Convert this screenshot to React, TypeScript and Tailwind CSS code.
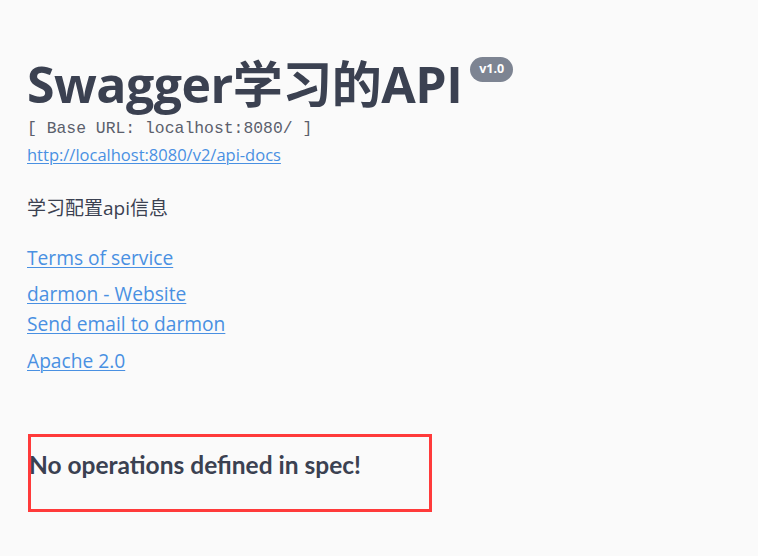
import React from "react";

const linkCls =
  "text-[#4990e2] underline underline-offset-2 decoration-1 text-[19.2px] leading-[26px]";

function VersionBadge({ label }: { label: string }) {
  return (
    <span className="ml-2 mt-[7px] inline-flex h-[25px] items-center rounded-full bg-[#7d8492] px-[9px] text-[12.5px] font-bold text-white self-start">
      {label}
    </span>
  );
}

export default function App() {
  return (
    <div
      className="relative min-h-[556px] w-full bg-[#fafafa] text-[#3b4151]"
      style={{ fontFamily: '"Open Sans", "Noto Sans CJK SC", sans-serif' }}
    >
      <div className="px-[27px] pt-[50px]">
        <div className="flex items-start">
          <h2 className="text-[50px] font-bold leading-[68px] tracking-[-0.5px]">
            Swagger学习的API
          </h2>
          <VersionBadge label="v1.0" />
        </div>
        <pre
          className="mt-[1px] text-[16.4px] font-light leading-[20px] text-[#5b606c]"
          style={{ fontFamily: '"Liberation Mono", monospace' }}
        >
          [ Base URL: localhost:8080/ ]
        </pre>
        <a
          href="#"
          className="mt-[5px] block w-fit text-[16.5px] leading-[22px] text-[#4990e2] underline decoration-1 underline-offset-2"
        >
          http://localhost:8080/v2/api-docs
        </a>

        <p className="mt-[29px] text-[19px] leading-[26px]">学习配置api信息</p>

        <div className="mt-[24px]">
          <a href="#" className={linkCls}>
            Terms of service
          </a>
        </div>
        <div className="mt-[10px] flex flex-col gap-[4px]">
          <a href="#" className={linkCls + " w-fit"}>
            darmon - Website
          </a>
          <a href="#" className={linkCls + " w-fit"}>
            Send email to darmon
          </a>
        </div>
        <div className="mt-[11px]">
          <a href="#" className={linkCls}>
            Apache 2.0
          </a>
        </div>

        <h3
          className="mt-[75px] pl-[2px] text-[24.5px] font-bold leading-[32px]"
          style={{ fontFamily: "Lato, sans-serif" }}
        >
          No operations defined in spec!
        </h3>
      </div>

      <div className="pointer-events-none absolute left-[28px] top-[434px] h-[78px] w-[404px] border-[3px] border-[#ff3a3a]" />
    </div>
  );
}
